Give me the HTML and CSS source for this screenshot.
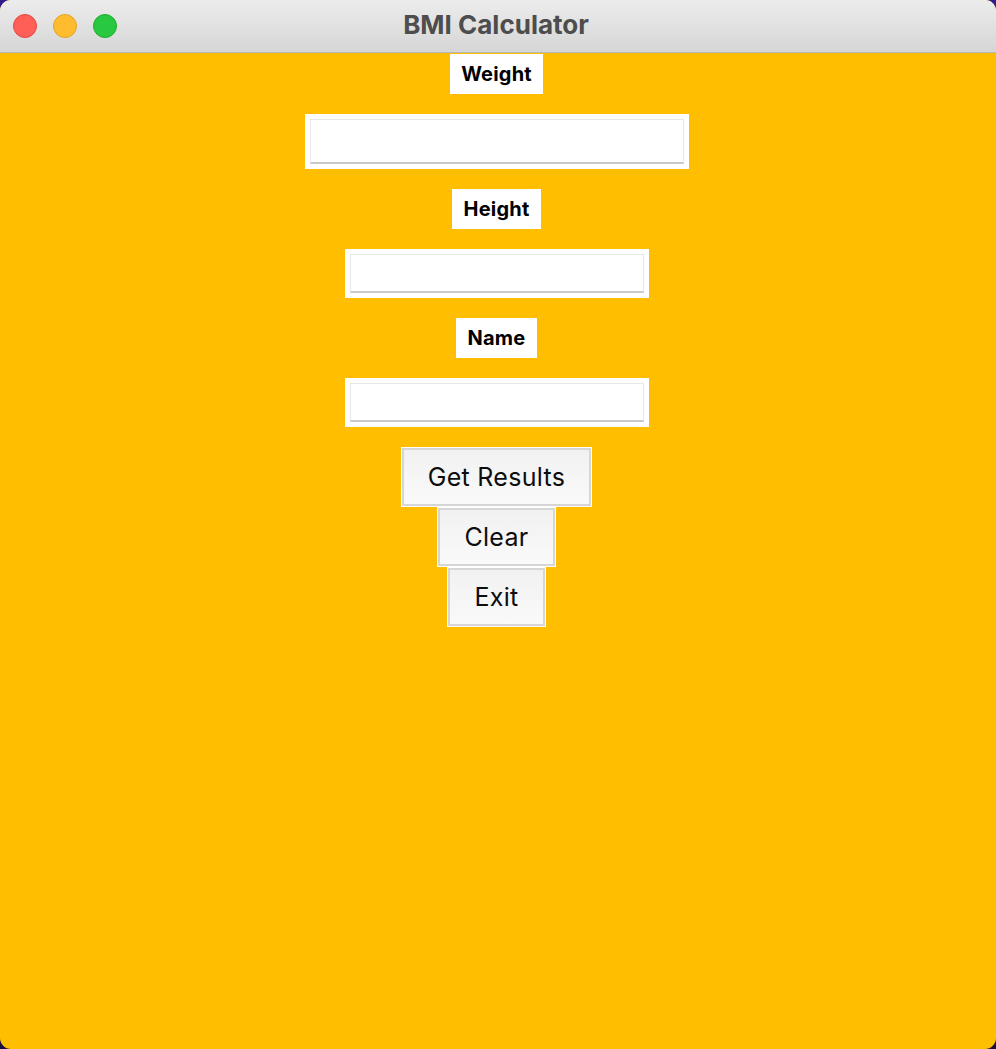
FILE: index.html
```html
<!DOCTYPE html>
<html>
<head>
<meta charset="utf-8">
<title>BMI Calculator</title>
<link rel="stylesheet" href="styles.css">
</head>
<body>
<div class="window">
  <div class="titlebar">
    <div class="lights">
      <span class="light red"></span>
      <span class="light yellow"></span>
      <span class="light green"></span>
    </div>
    <div class="title">BMI Calculator</div>
  </div>
  <div class="content">
    <div class="label">Weight</div>
    <div class="entry entry-wide"><div class="field"></div></div>
    <div class="label">Height</div>
    <div class="entry"><div class="field"></div></div>
    <div class="label">Name</div>
    <div class="entry"><div class="field"></div></div>
    <div class="buttons">
      <div class="btn">Get Results</div>
      <div class="btn">Clear</div>
      <div class="btn">Exit</div>
    </div>
  </div>
</div>
</body>
</html>
```

FILE: styles.css
```css
html, body {
  margin: 0;
  padding: 0;
}
body {
  width: 996px;
  height: 1049px;
  background: linear-gradient(180deg, #2e1c8c 0%, #231565 60%, #1a1040 100%);
  font-family: Inter, "Liberation Sans", sans-serif;
  overflow: hidden;
}
.window {
  width: 996px;
  height: 1049px;
  border-radius: 11px;
  overflow: hidden;
  display: flex;
  flex-direction: column;
  background: #ffbf00;
}
.titlebar {
  height: 52px;
  border-bottom: 1px solid #b8b8b8;
  background: linear-gradient(180deg, #ececec 0%, #d6d6d6 100%);
  display: flex;
  align-items: center;
  position: relative;
  flex: none;
}
.lights {
  display: flex;
  gap: 16px;
  padding-left: 13px;
}
.light {
  width: 22px;
  height: 22px;
  border-radius: 50%;
  display: block;
}
.red { background: #ff5f57; border: 1px solid #e2463f; }
.yellow { background: #febc2e; border: 1px solid #e1a325; }
.green { background: #28c840; border: 1px solid #1eac2f; }
.title {
  position: absolute;
  left: 0;
  right: 0;
  top: 0;
  height: 50px;
  line-height: 50px;
  text-align: center;
  font-weight: 700;
  font-size: 26px;
  color: #4d4d4d;
  padding-right: 4px;
}
.content {
  flex: 1;
  display: flex;
  flex-direction: column;
  align-items: center;
  padding-top: 1px;
  padding-right: 3px;
  gap: 20px;
}
.label {
  background: #ffffff;
  height: 40px;
  line-height: 40px;
  padding: 0 11.5px;
  font-weight: 700;
  font-size: 20px;
  letter-spacing: 0.2px;
  color: #000;
}
.entry {
  background: #ffffff;
  padding: 5px;
}
.field {
  width: 292px;
  height: 36px;
  border: 1px solid #e6e6e6;
  border-bottom: 2px solid #c9c9c9;
  box-sizing: content-box;
}
.entry-wide .field {
  width: 372px;
  height: 42px;
}
.buttons {
  display: flex;
  flex-direction: column;
  align-items: center;
}
.btn {
  border: 1px solid #ffffff;
  box-shadow: inset 0 0 0 2px #d6d6d6;
  background: linear-gradient(180deg, #f1f1f1 0%, #fafafa 100%);
  padding: 0 26px;
  height: 58px;
  line-height: 58px;
  font-size: 25px;
  letter-spacing: 0.3px;
  color: #0d0d0d;
}
```
